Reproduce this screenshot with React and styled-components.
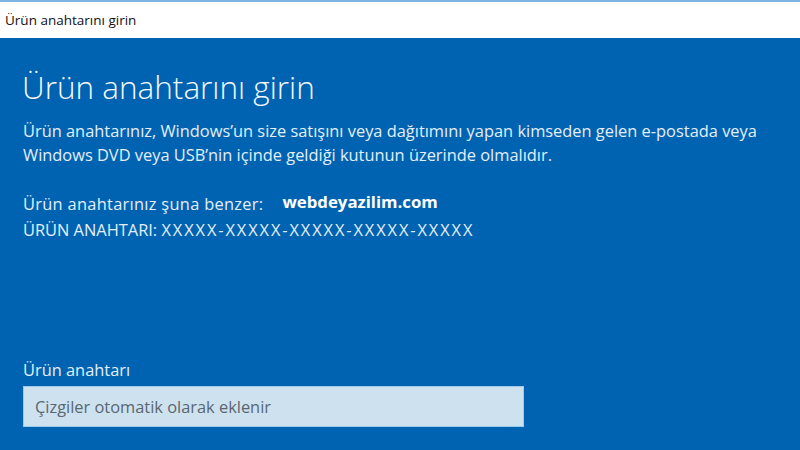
import React from "react";
import styled, { createGlobalStyle } from "styled-components";

const GlobalStyle = createGlobalStyle`
  html, body {
    margin: 0;
    padding: 0;
    background: #0063b1;
  }
  body {
    font-family: "Open Sans", "Noto Sans", "Liberation Sans", sans-serif;
  }
`;

const Window = styled.div`
  width: 800px;
  height: 450px;
  display: flex;
  flex-direction: column;
  overflow: hidden;
  border-top: 2px solid #7fb4e2;
  box-sizing: border-box;
`;

const TitleBar = styled.div`
  height: 36px;
  flex: none;
  background: #ffffff;
  display: flex;
  align-items: center;
  padding-left: 5px;
  font-size: 13.5px;
  color: #111;
`;

const Content = styled.div`
  flex: 1;
  background: #0063b1;
  padding: 27px 0 0 22px;
  color: #e4eef8;
  white-space: nowrap;
`;

const Heading = styled.h1`
  margin: 0 0 10px;
  font-size: 31.5px;
  font-weight: 300;
  line-height: 44px;
  color: #f4f8fc;
`;

const Text = styled.p`
  margin: ${(p) => p.$mt || 0}px 0 0 1px;
  font-size: 16.4px;
  line-height: ${(p) => p.$lh || 24}px;
`;

const Wide = styled.span`
  letter-spacing: ${(p) => p.$ls}px;
`;

const Watermark = styled.span`
  margin-left: 19px;
  font-size: 16.8px;
  font-weight: 700;
  color: #ffffff;
  position: relative;
  top: -2px;
`;

const Field = styled.div`
  margin-top: 116px;
  display: flex;
  flex-direction: column;
  gap: 5px;
  padding-left: 1px;
`;

const Label = styled.div`
  font-size: 16.4px;
  line-height: 22px;
`;

const Input = styled.div`
  width: 501px;
  height: 41px;
  box-sizing: border-box;
  background: #cde1ee;
  border: 1px solid #9ccbec;
  display: flex;
  align-items: center;
  padding-left: 11px;
  font-size: 16.4px;
  color: #5a6772;
`;

export default function App() {
  return (
    <>
      <GlobalStyle />
      <Window>
        <TitleBar>Ürün anahtarını girin</TitleBar>
        <Content>
          <Heading>Ürün anahtarını girin</Heading>
          <Text>
            Ürün anahtarınız, Windows’un size satışını veya dağıtımını yapan
            kimseden gelen e-postada veya
            <br />
            Windows DVD veya USB’nin içinde geldiği kutunun üzerinde olmalıdır.
          </Text>
          <Text $mt={24} $lh={26}>
            <Wide $ls={0.3}>Ürün anahtarınız şuna benzer:</Wide>
            <Watermark>webdeyazilim.com</Watermark>
            <br />
            ÜRÜN ANAHTARI: <Wide $ls={1.9}>XXXXX-XXXXX-XXXXX-XXXXX-XXXXX</Wide>
          </Text>
          <Field>
            <Label>Ürün anahtarı</Label>
            <Input>Çizgiler otomatik olarak eklenir</Input>
          </Field>
        </Content>
      </Window>
    </>
  );
}
